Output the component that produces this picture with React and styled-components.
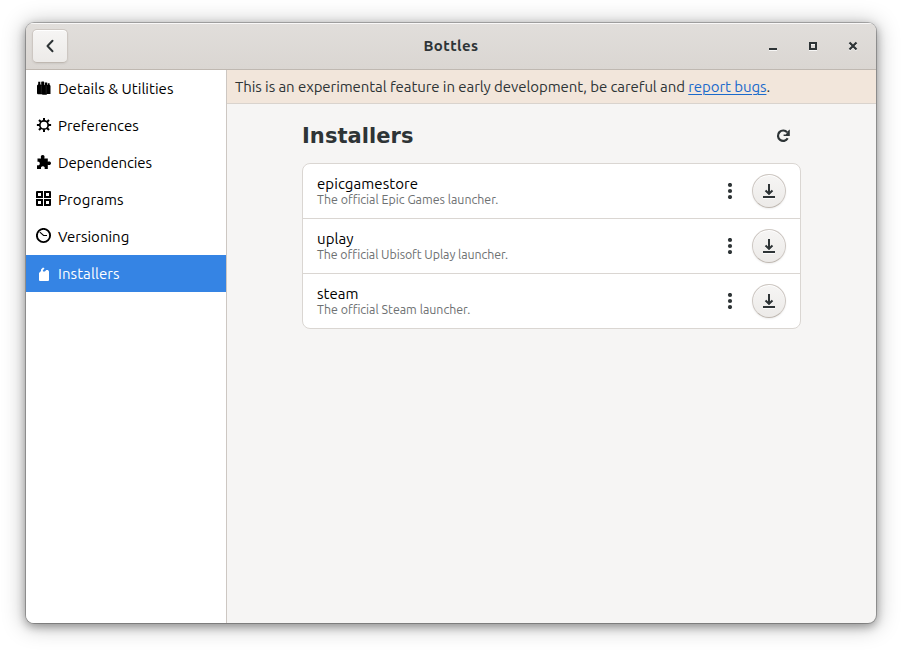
import React from "react";
import styled, { createGlobalStyle } from "styled-components";

const GlobalStyle = createGlobalStyle`
  * { box-sizing: border-box; }
  html, body { margin: 0; background: #fff; }
  body {
    font-family: Ubuntu, "Noto Sans", sans-serif;
    font-size: 15px;
    color: #2e3436;
    overflow: hidden;
  }
  svg { display: block; flex: none; }
`;

const Desktop = styled.div`
  width: 902px;
  height: 652px;
  padding: 23px 26px 29px;
`;

const Window = styled.main`
  width: 850px;
  height: 600px;
  display: flex;
  flex-direction: column;
  overflow: hidden;
  border-radius: 8px;
  background: #f6f5f4;
  box-shadow: 0 0 0 1px rgba(0, 0, 0, 0.23), 0 3px 9px 1px rgba(0, 0, 0, 0.3),
    0 2px 22px 2px rgba(0, 0, 0, 0.26);
`;

const HeaderBar = styled.header`
  flex: none;
  height: 47px;
  display: grid;
  grid-template-columns: 1fr auto 1fr;
  align-items: center;
  padding: 0 6px 1px 6px;
  border-bottom: 1px solid #bfb8b1;
  background: linear-gradient(to top, #dad6d2, #e1dedb);
  box-shadow: inset 0 1px #f9f8f8;
`;

const BackButton = styled.button`
  width: 36px;
  height: 34px;
  padding: 0 1px 0 0;
  display: grid;
  place-items: center;
  border: 1px solid #cdc7c2;
  border-bottom-color: #bfb8b1;
  border-radius: 5px;
  color: #2e3436;
  background: linear-gradient(to top, #edebe9 2px, #f6f5f4);
  box-shadow: inset 0 1px #fff, 0 1px 2px rgba(0, 0, 0, 0.07);
`;

const WindowTitle = styled.h1`
  margin: 0;
  font-size: 15px;
  line-height: 20px;
  font-weight: 700;
  letter-spacing: 0.4px;
`;

const WindowControls = styled.div`
  justify-self: end;
  display: flex;
  margin-right: -3px;
`;

const ControlButton = styled.button`
  width: 40px;
  height: 34px;
  padding: 0;
  display: grid;
  place-items: center;
  border: 0;
  color: #2e3436;
  background: none;
  svg { filter: drop-shadow(0 1px rgba(255, 255, 255, 0.77)); }
`;

const Body = styled.div`
  flex: 1;
  display: flex;
  min-height: 0;
`;

const Sidebar = styled.nav`
  flex: none;
  width: 201px;
  background: #fff;
  border-right: 1px solid #cdc7c2;
`;

const NavItem = styled.a`
  height: 37px;
  display: flex;
  align-items: flex-start;
  gap: 6px;
  padding: 10px 10px 0;
  color: ${(p) => (p.$active ? "#fff" : "#000")};
  background: ${(p) => (p.$active ? "#3584e4" : "transparent")};
`;

const NavLabel = styled.span`
  line-height: 20px;
  margin-top: -1px;
  white-space: nowrap;
  letter-spacing: ${(p) => p.$tracking || 0}px;
`;

const Content = styled.section`
  flex: 1;
  min-width: 0;
`;

const InfoBar = styled.div`
  height: 34px;
  padding: 7px 8px 0;
  line-height: 20px;
  white-space: nowrap;
  letter-spacing: -0.076px;
  background: #f2e6db;
  border-bottom: 1px solid #d9d3cd;
`;

const Link = styled.a`
  color: #1b6acb;
  text-decoration: underline;
  text-decoration-thickness: 1px;
  text-underline-offset: 2px;
`;

const Page = styled.div`
  width: 499px;
  margin-left: 75px;
`;

const PageHeader = styled.div`
  height: 59px;
  display: flex;
  align-items: center;
  justify-content: space-between;
  padding: 4px 10px 0 0;
`;

const PageTitle = styled.h2`
  margin: 0;
  font: 700 21px/26px "DejaVu Sans", sans-serif;
  letter-spacing: 0.06px;
`;

const InstallerList = styled.ul`
  list-style: none;
  margin: 0;
  padding: 0;
  background: #fff;
  border: 1px solid #dad6d2;
  border-radius: 8px;
`;

const InstallerRow = styled.li`
  height: ${(p) => (p.$last ? 54 : 55)}px;
  display: flex;
  align-items: center;
  padding: 0 14px;
  border-bottom: ${(p) => (p.$last ? "0" : "1px solid #dad6d2")};
`;

const InstallerText = styled.div`
  flex: 1;
`;

const InstallerName = styled.div`
  color: #000;
  line-height: 18px;
  letter-spacing: 0.06px;
`;

const InstallerDescription = styled.div`
  margin-top: -1px;
  padding-bottom: 1px;
  color: #6d7071;
  font-size: 12.4px;
  line-height: 14px;
  letter-spacing: ${(p) => p.$tracking || 0}px;
`;

const MenuButton = styled.button`
  width: 16px;
  height: 34px;
  margin-right: 14px;
  padding: 0;
  display: grid;
  place-items: center;
  border: 0;
  background: none;
  color: #2e3436;
`;

const DownloadButton = styled.button`
  width: 34px;
  height: 34px;
  padding: 0;
  display: grid;
  place-items: center;
  border: 1px solid #cdc7c2;
  border-bottom-color: #bfb8b1;
  border-radius: 50%;
  color: #2e3436;
  background: linear-gradient(to top, #edebe9 2px, #f6f5f4);
  box-shadow: inset 0 1px #fff, 0 1px 2px rgba(0, 0, 0, 0.07);
  svg { filter: drop-shadow(0 1px rgba(255, 255, 255, 0.77)); }
`;

const Icon = ({ children }) => (
  <svg width="16" height="16" viewBox="0 0 16 16" fill="currentColor">
    {children}
  </svg>
);

const BackIcon = () => (
  <Icon>
    <path d="M10.5 2.8 5.5 8l5 5.2" fill="none" stroke="currentColor" strokeWidth="2" strokeLinecap="round" strokeLinejoin="round" />
  </Icon>
);

const MinimizeIcon = () => <Icon><path d="M4 10h8v2H4z" /></Icon>;
const MaximizeIcon = () => <Icon><path d="M4 4h8v8H4zM6 6v4h4V6z" fillRule="evenodd" /></Icon>;
const CloseIcon = () => <Icon><path d="m4.5 4.5 7 7M11.5 4.5l-7 7" stroke="currentColor" strokeWidth="2.2" /></Icon>;

const BottlesIcon = () => (
  <Icon>
    <path d="M2.2 1.8h2.100V4.200l.9.800V2l.6-.6h1.800l.6.6v2.600l.7.600V2.600h2.300v2l.6.700V3.200h1.800v1.600l.9.900V14H11l-.4.800H6.500L6 14.300H1.800L1 13.500V5.400l1.200-1.200z" />
    <path d="M5.300 5.500v8M10.200 5.500v8" stroke="#fff" strokeOpacity=".25" strokeWidth=".5" />
  </Icon>
);

const GearIcon = () => (
  <Icon>
    <circle cx="8" cy="8" r="4.200" fill="none" stroke="currentColor" strokeWidth="1.700" />
    {[0, 45, 90, 135, 180, 225, 270, 315].map((angle) => (
      <path key={angle} d="M7 3.800V.9h2v2.900z" transform={`rotate(${angle} 8 8)`} />
    ))}
  </Icon>
);

const PuzzleIcon = () => (
  <Icon>
    <path d="M1.500 4.500h3.600C4.400 2.500 5 1 6.700 1s2.300 1.500 1.600 3.500h3.500v3.200c1.800-.6 3.200 0 3.200 1.500s-1.400 2.200-3.200 1.600V15H8.600c.5-1.700-.2-2.700-1.700-2.700S4.600 13.300 5.100 15H1v-3.700c1.700.4 2.800-.3 2.800-1.800S2.700 7.400 1.500 7.800z" />
  </Icon>
);

const GridIcon = () => (
  <Icon>
    <path fillRule="evenodd" d="M1 0h6v7H0V1a1 1 0 0 1 1-1zM2 2v3h3V2zM8 0h6a1 1 0 0 1 1 1v6H8zM10 2v3h3V2zM0 8h7v7H1a1 1 0 0 1-1-1zM2 10v3h3v-3zM8 8h7v6a1 1 0 0 1-1 1H8zM10 10v3h3v-3z" />
  </Icon>
);

const ClockIcon = () => (
  <Icon>
    <circle cx="7.500" cy="7.500" r="6.600" fill="none" stroke="currentColor" strokeWidth="1.900" />
    <path d="m3.800 4.200 3.800 3.300H11" fill="none" stroke="currentColor" strokeWidth="1.100" />
  </Icon>
);

const PackageIcon = () => (
  <Icon>
    <path d="M3 8 5 6V4.500L7 2.600l1.500.7-1.800 2.500.5.700h1.700L10.300 5H12l1 1.500V15a1 1 0 0 1-1 1H4a1 1 0 0 1-1-1z" />
  </Icon>
);

const RefreshIcon = () => (
  <Icon>
    <path d="M12.200 4.400A5.200 5.200 0 1 0 12.700 10.300" fill="none" stroke="currentColor" strokeWidth="2.200" />
    <path d="M14.800 1.800V8H8.600V6.600h2.200L14 1.800z" />
  </Icon>
);

const MoreIcon = () => (
  <Icon>
    <circle cx="8" cy="2" r="2.100" />
    <circle cx="8" cy="8" r="2.100" />
    <circle cx="8" cy="14" r="2.100" />
  </Icon>
);

const DownloadIcon = () => (
  <Icon>
    <path d="M2 13h12v2H2zM7 1h2v9H7z" />
    <path d="m4.500 7.500 3.500 3.300 3.500-3.300" fill="none" stroke="currentColor" strokeWidth="2" />
  </Icon>
);

const navItems = [
  { label: "Details & Utilities", icon: BottlesIcon, tracking: 0.03 },
  { label: "Preferences", icon: GearIcon, tracking: -0.05 },
  { label: "Dependencies", icon: PuzzleIcon, tracking: -0.14 },
  { label: "Programs", icon: GridIcon, tracking: 0.1 },
  { label: "Versioning", icon: ClockIcon },
  { label: "Installers", icon: PackageIcon, tracking: 0.08, active: true },
];

const installers = [
  { name: "epicgamestore", description: "The official Epic Games launcher." },
  { name: "uplay", description: "The official Ubisoft Uplay launcher.", tracking: -0.07 },
  { name: "steam", description: "The official Steam launcher." },
];

export default function App() {
  return (
    <>
      <GlobalStyle />
      <Desktop>
        <Window>
          <HeaderBar>
            <BackButton aria-label="Back"><BackIcon /></BackButton>
            <WindowTitle>Bottles</WindowTitle>
            <WindowControls>
              <ControlButton aria-label="Minimize"><MinimizeIcon /></ControlButton>
              <ControlButton aria-label="Maximize"><MaximizeIcon /></ControlButton>
              <ControlButton aria-label="Close"><CloseIcon /></ControlButton>
            </WindowControls>
          </HeaderBar>
          <Body>
            <Sidebar>
              {navItems.map(({ label, icon: ItemIcon, tracking, active }) => (
                <NavItem key={label} $active={active}>
                  <ItemIcon />
                  <NavLabel $tracking={tracking}>{label}</NavLabel>
                </NavItem>
              ))}
            </Sidebar>
            <Content>
              <InfoBar>
                This is an experimental feature in early development, be careful and <Link>report bugs</Link>.
              </InfoBar>
              <Page>
                <PageHeader>
                  <PageTitle>Installers</PageTitle>
                  <RefreshIcon />
                </PageHeader>
                <InstallerList>
                  {installers.map((item, i) => (
                    <InstallerRow key={item.name} $last={i === installers.length - 1}>
                      <InstallerText>
                        <InstallerName>{item.name}</InstallerName>
                        <InstallerDescription $tracking={item.tracking}>{item.description}</InstallerDescription>
                      </InstallerText>
                      <MenuButton aria-label="More"><MoreIcon /></MenuButton>
                      <DownloadButton aria-label="Install"><DownloadIcon /></DownloadButton>
                    </InstallerRow>
                  ))}
                </InstallerList>
              </Page>
            </Content>
          </Body>
        </Window>
      </Desktop>
    </>
  );
}
